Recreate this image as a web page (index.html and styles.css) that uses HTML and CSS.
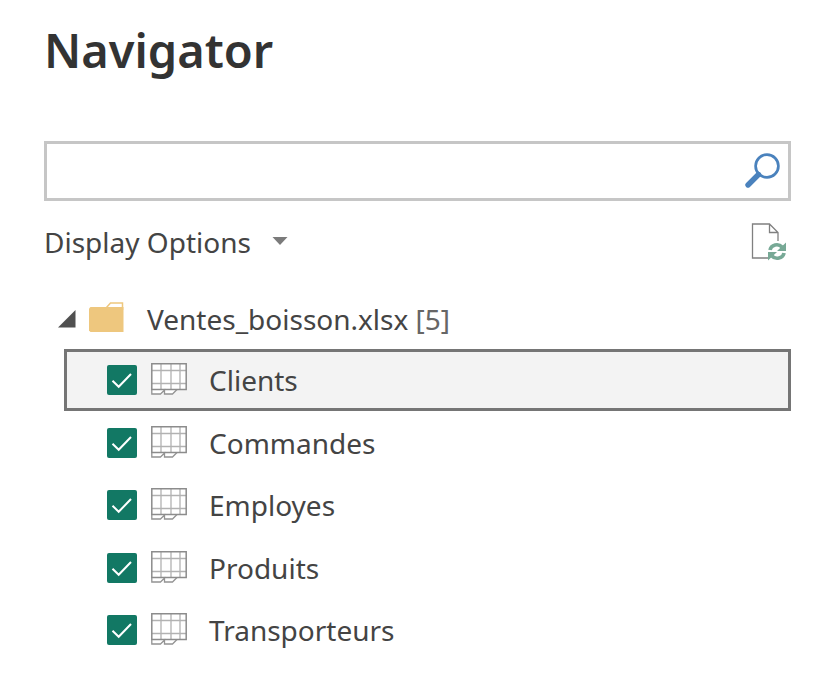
FILE: index.html
```html
<!DOCTYPE html>
<html lang="en">
<head>
<meta charset="utf-8">
<meta name="viewport" content="width=device-width, initial-scale=1">
<title>Navigator</title>
<link rel="stylesheet" href="styles.css">
</head>
<body>
<svg class="defs" aria-hidden="true">
  <symbol id="table" viewBox="0 0 36 32">
    <path d="M.5 .5h35v26h-35z" fill="#fff"/>
    <path d="M10 1v25M20 1v25M29 1v25M1 7.500h34M1 20.500h34" fill="none" stroke="#b2b2b2" stroke-width="1.300"/>
    <path d="M.8 26.500V31H9.500L13.500 27V31H21.500L26 26.500" fill="#fff" stroke="#939393" stroke-width="1.300"/>
    <path d="M.8 .8h34.400v25.700H.8z" fill="none" stroke="#8c8c8c" stroke-width="1.500"/>
  </symbol>
  <symbol id="check" viewBox="0 0 30 30">
    <path d="M5.500 15.700L11.700 21.800L24 9" fill="none" stroke="#fff" stroke-width="2"/>
  </symbol>
</svg>
<main class="navigator">
  <h1 class="title">Navigator</h1>
  <form class="search">
    <input class="search-input" type="text" aria-label="Search">
    <button class="icon-button" type="button" aria-label="Search">
      <svg width="36" height="36" viewBox="0 0 36 36" fill="none" stroke="#4a82bd">
        <circle cx="23" cy="13" r="11.400" stroke-width="2.700"/>
        <path d="M14.500 21.500L4 32" stroke-width="5.400" stroke-linecap="round"/>
      </svg>
    </button>
  </form>
  <div class="toolbar">
    <button class="options" type="button">Display Options
      <svg width="16" height="10" viewBox="0 0 16 10"><path d="M.5 0h15L8 8z" fill="#7b7b7b"/></svg>
    </button>
    <button class="icon-button" type="button" aria-label="Refresh">
      <svg width="36" height="38" viewBox="0 0 36 38">
        <path d="M18 35H1.500V1H18.500L27 9.500V18M18.500 1V9.500H27" fill="none" stroke="#808080" stroke-width="1.300"/>
        <path d="M19 27C20 21.500 27.500 20 31 24M33 30C32 35.500 24.500 37 21 33" fill="none" stroke="#77a996" stroke-width="3.600"/>
        <path d="M35 19.500V28H26zM17 37.500V29H26z" fill="#77a996"/>
      </svg>
    </button>
  </div>
  <section class="tree">
    <button class="source" type="button" aria-expanded="true">
      <svg width="18" height="18" viewBox="0 0 18 18"><path d="M17.500 0V17.500H0z" fill="#505050"/></svg>
      <svg class="folder" width="35" height="34" viewBox="0 0 35 34">
        <path d="M17.500 5.500L21.500 1H33.500V8" fill="#fff" stroke="#eec77e" stroke-width="1.500"/>
        <path d="M1.500 5H34.500V30H1.500L0 28.500V6.500z" fill="#eec77e"/>
      </svg>
      <span>Ventes_boisson.xlsx <span class="count">[5]</span></span>
    </button>
    <ul class="items">
      <li><label class="item selected"><span class="box"><input type="checkbox" checked><svg><use href="#check"/></svg></span><svg class="table-icon"><use href="#table"/></svg>Clients</label></li>
      <li><label class="item"><span class="box"><input type="checkbox" checked><svg><use href="#check"/></svg></span><svg class="table-icon"><use href="#table"/></svg>Commandes</label></li>
      <li><label class="item"><span class="box"><input type="checkbox" checked><svg><use href="#check"/></svg></span><svg class="table-icon"><use href="#table"/></svg>Employes</label></li>
      <li><label class="item"><span class="box"><input type="checkbox" checked><svg><use href="#check"/></svg></span><svg class="table-icon"><use href="#table"/></svg>Produits</label></li>
      <li><label class="item"><span class="box"><input type="checkbox" checked><svg><use href="#check"/></svg></span><svg class="table-icon"><use href="#table"/></svg>Transporteurs</label></li>
    </ul>
  </section>
</main>
</body>
</html>
```

FILE: styles.css
```css
* {
  box-sizing: border-box;
}

body {
  margin: 0;
  background: #fff;
  color: #444;
  font-family: "Noto Sans", "Open Sans", sans-serif;
  font-size: 28px;
  line-height: 40px;
}

button,
input {
  font: inherit;
  color: inherit;
}

button {
  display: flex;
  align-items: center;
  padding: 0;
  border: 0;
  background: none;
}

svg {
  display: block;
  flex: none;
}

.defs {
  display: none;
}

.navigator {
  padding: 16px 34px 12px 44px;
}

.title {
  margin: 0;
  color: #333;
  font-size: 47px;
  font-weight: 600;
  line-height: 68px;
}

.search {
  display: flex;
  align-items: center;
  height: 60px;
  margin-top: 57px;
  padding-right: 8px;
  border: 3px solid #c6c6c6;
}

.search-input {
  flex: 1;
  min-width: 0;
  height: 100%;
  padding: 0 12px;
  border: 0;
  outline: 0;
  background: transparent;
}

.toolbar {
  display: flex;
  align-items: center;
  justify-content: space-between;
  margin-top: 21px;
  padding-right: 4px;
}

.options {
  gap: 21px;
}

.tree {
  margin-top: 37px;
}

.source {
  padding-left: 14px;
  gap: 13px;
}

.folder {
  margin-right: 10px;
}

.count {
  color: #666;
}

.items {
  display: grid;
  grid-auto-rows: 62px 63px;
  margin: 10px 0 0 20px;
  padding: 0;
  list-style: none;
}

.item {
  display: flex;
  align-items: center;
  height: 100%;
  padding-left: 40px;
  border: 3px solid transparent;
}

.selected {
  border-color: #757575;
  background: #f3f3f3;
}

.box {
  display: grid;
  width: 30px;
  height: 30px;
}

.box > * {
  grid-area: 1 / 1;
  width: 30px;
  height: 30px;
  margin: 0;
  pointer-events: none;
}

.box input {
  appearance: none;
  border-radius: 2px;
  background: #127864;
}

.table-icon {
  width: 36px;
  height: 32px;
  margin: 0 22px 2px 14px;
}
```
